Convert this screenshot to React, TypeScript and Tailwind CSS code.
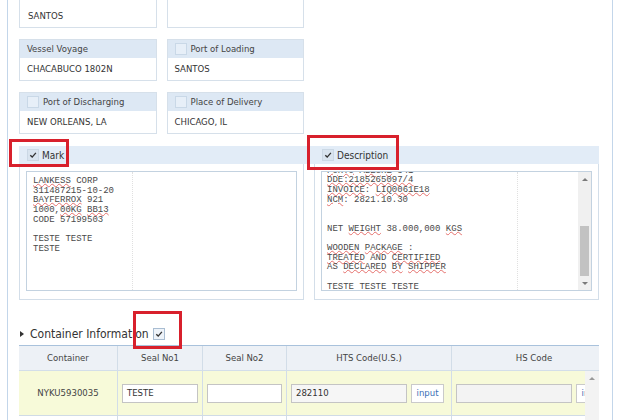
import React from "react";

const SANS = "font-['DejaVu_Sans_Condensed','DejaVu_Sans',sans-serif]";
const MONO = "font-['Liberation_Mono',monospace]";

function CheckMark() {
  return (
    <svg viewBox="0 0 10 10" className="h-[8px] w-[8px]">
      <path d="M1.6 5.3 L4 7.6 L8.6 2.4" stroke="#333" strokeWidth="1.7" fill="none" />
    </svg>
  );
}

function FieldBox({ label, value, cb }: { label: string; value: string; cb?: boolean }) {
  return (
    <div className="border border-[#d6e0ea]">
      <div className="flex h-[18px] items-center gap-[4px] bg-[#dde8f4] px-[7px] text-[#444]">
        {cb && <span className="h-[12px] w-[12px] border border-[#c9d8e7] bg-[#e7eff8]" />}
        {label}
      </div>
      <div className="flex h-[22px] items-center bg-white px-[7px] text-[#333]">{value}</div>
    </div>
  );
}

// "~word~" marks a word the spell checker flagged
function Line({ text }: { text: string }) {
  const parts = text.split("~");
  return (
    <div className="h-[9.7px]">
      {parts.map((p, i) =>
        i % 2 === 1 ? (
          <span key={i} className="underline decoration-wavy decoration-[#e5706c] decoration-1 underline-offset-0">
            {p}
          </span>
        ) : (
          <span key={i}>{p}</span>
        ),
      )}
    </div>
  );
}

const markLines = [
  "~LANKESS~ CORP",
  "311487215-10-20",
  "~BAYFERROX~ 921",
  "1000,~00KG~ ~BB13~",
  "CODE 57199503",
  "",
  "TESTE TESTE",
  "TESTE",
];

const descLines = [
  "~PORTO~ ~ALEGRE~ 341",
  "~DDE:2185265097/4~",
  "~INVOICE~: ~LIQ0061E18~",
  "~NCM~: 2821.10.30",
  "",
  "",
  "NET ~WEIGHT~ 38.000,000 ~KGS~",
  "",
  "~WOODEN~ ~PACKAGE~ :",
  "~TREATED~ AND ~CERTIFIED~",
  "AS ~DECLARED~ ~BY~ ~SHIPPER~",
  "",
  "TESTE TESTE TESTE",
];

function Header({ label, children }: { label: string; children?: React.ReactNode }) {
  return (
    <div className="relative flex items-center gap-[3px] pl-[8px]">
      <span className="flex h-[12px] w-[12px] items-center justify-center border border-[#cbd8e5] bg-[#d9e4ef]">
        <CheckMark />
      </span>
      <span className="text-[#333]">{label}</span>
      {children}
    </div>
  );
}

function Cell({ w, children, className = "" }: { w: string; children?: React.ReactNode; className?: string }) {
  return <div className={`${w} flex shrink-0 items-center border-r border-[#d2dde8] ${className}`}>{children}</div>;
}

export default function App() {
  return (
    <div className={`h-[420px] w-[624px] overflow-hidden bg-white text-[9.5px] ${SANS}`}>
      <div className="ml-[7px] mt-[10px] w-[606px] border-x border-[#c3d6ea] pl-[11px] pr-[13px]">
        <div className="-mt-[10px]">
          <div className="grid grid-cols-4 gap-x-[10px]">
            <div className="flex h-[28px] items-center border-x border-b border-[#d6e0ea] px-[8px] pt-[6px] text-[#333]">
              SANTOS
            </div>
            <div className="h-[28px] border-x border-b border-[#d6e0ea]" />
          </div>
          <div className="mt-[11px] grid grid-cols-4 gap-x-[10px]">
            <FieldBox label="Vessel Voyage" value="CHACABUCO 1802N" />
            <FieldBox label="Port of Loading" value="SANTOS" cb />
          </div>
          <div className="mt-[11px] grid grid-cols-4 gap-x-[10px]">
            <FieldBox label="Port of Discharging" value="NEW ORLEANS, LA" cb />
            <FieldBox label="Place of Delivery" value="CHICAGO, IL" cb />
          </div>

          <div className="mt-[12px] grid h-[18px] grid-cols-2 gap-x-[10px] bg-[#e2ecf7] text-[10px]">
            <Header label="Mark">
              <div className="absolute -left-[10px] -top-[7px] h-[28px] w-[60px] border-[3px] border-[#d8202c]" />
            </Header>
            <Header label="Description">
              <div className="absolute -left-[7px] -top-[11px] h-[35px] w-[92px] border-[3px] border-[#d8202c]" />
            </Header>
          </div>
          <div className={`grid grid-cols-2 gap-x-[10px] text-[9px] text-[#4a4a4a] ${MONO}`}>
            <div className="border-x border-b border-[#d3dee9] px-[6px] pb-[8px] pt-[7px]">
              <div className="relative h-[120px] overflow-hidden border border-[#c3d2e0] bg-white pl-[6px] pt-[3px] whitespace-pre">
                <div className="absolute bottom-0 left-[105px] top-0 border-l border-dotted border-[#e0e0e0]" />
                {markLines.map((l, i) => (
                  <Line key={i} text={l} />
                ))}
              </div>
            </div>
            <div className="border-x border-b border-[#d3dee9] px-[6px] pb-[8px] pt-[7px]">
              <div className="flex h-[120px] overflow-hidden border border-[#c3d2e0] bg-white">
                <div className="relative flex-1 overflow-hidden pl-[5px] whitespace-pre">
                  <div className="absolute bottom-0 left-[195px] top-0 border-l border-dotted border-[#e0e0e0]" />
                  <div className="-mt-[7.5px]">
                    {descLines.map((l, i) => (
                      <Line key={i} text={l} />
                    ))}
                  </div>
                </div>
                <div className="flex w-[13px] flex-col bg-[#f0f0f0]">
                  <div className="flex h-[14px] items-center justify-center">
                    <span className="border-x-[3px] border-b-[3px] border-x-transparent border-b-[#7a7a7a]" />
                  </div>
                  <div className="flex flex-1 flex-col">
                    <div className="mx-[2px] mt-auto h-[50px] bg-[#c2c2c2]" />
                  </div>
                  <div className="flex h-[14px] items-center justify-center">
                    <span className="border-x-[3px] border-t-[3px] border-x-transparent border-t-[#7a7a7a]" />
                  </div>
                </div>
              </div>
            </div>
          </div>

          <div className="mt-[26px] flex h-[16px] items-center text-[12px] text-[#333]">
            <span className="ml-[1px] border-y-[3px] border-l-[4px] border-y-transparent border-l-[#333]" />
            <span className="ml-[6px]">Container Information</span>
            <span className="relative ml-[4px] flex h-[12px] w-[12px] items-center justify-center border border-[#a9bdd2] bg-[#eef3f9]">
              <CheckMark />
              <span className="absolute -left-[21px] -top-[18px] h-[38px] w-[49px] border-[3px] border-[#d8202c]" />
            </span>
          </div>

          <div className="mt-[3px] text-[#444]">
            <div className="flex h-[26px] overflow-hidden border-y border-b-[#d3dee9] border-t-[#a9c2dc] bg-[#edf1f6]">
              <Cell w="w-[99px]" className="justify-center">Container</Cell>
              <Cell w="w-[85px]" className="justify-center">Seal No1</Cell>
              <Cell w="w-[84px]" className="justify-center">Seal No2</Cell>
              <Cell w="w-[165px]" className="justify-center">HTS Code(U.S.)</Cell>
              <Cell w="w-[165px]" className="justify-center">HS Code</Cell>
            </div>
            <div className="flex">
              <div className="w-[566px] overflow-hidden">
                <div className="flex h-[45px] border-b border-[#d0dbe6] bg-[#f7fad9]">
                  <Cell w="w-[99px]" className="justify-center">NYKU5930035</Cell>
                  <Cell w="w-[85px]" className="px-[4px]">
                    <div className="flex h-[19px] w-full items-center border border-[#c4c4c4] bg-white px-[4px] text-[#333]">TESTE</div>
                  </Cell>
                  <Cell w="w-[84px]" className="px-[4px]">
                    <div className="h-[19px] w-full border border-[#c4c4c4] bg-white" />
                  </Cell>
                  <Cell w="w-[165px]" className="gap-[4px] pl-[4px]">
                    <div className="flex h-[19px] w-[116px] items-center border border-[#c4c4c4] bg-[#f6f6f6] px-[4px] text-[#333]">282110</div>
                    <div className="flex h-[19px] w-[33px] items-center justify-center border border-[#cacaca] bg-white text-[#3d6fb6]">input</div>
                  </Cell>
                  <Cell w="w-[165px]" className="gap-[4px] pl-[4px]">
                    <div className="h-[19px] w-[116px] border border-[#c4c4c4] bg-[#f3f3f3]" />
                    <div className="flex h-[19px] w-[33px] items-center justify-center border border-[#cacaca] bg-white text-[#3d6fb6]">input</div>
                  </Cell>
                </div>
                <div className="flex h-[45px] bg-white">
                  <Cell w="w-[99px]" />
                  <Cell w="w-[85px]" />
                  <Cell w="w-[84px]" />
                  <Cell w="w-[165px]" />
                  <Cell w="w-[165px]" />
                </div>
              </div>
              <div className="flex w-[14px] flex-col items-center bg-[#f3f3f3] pt-[6px]">
                <span className="border-x-[3px] border-b-[3px] border-x-transparent border-b-[#9a9a9a]" />
              </div>
            </div>
          </div>
        </div>
      </div>
    </div>
  );
}
